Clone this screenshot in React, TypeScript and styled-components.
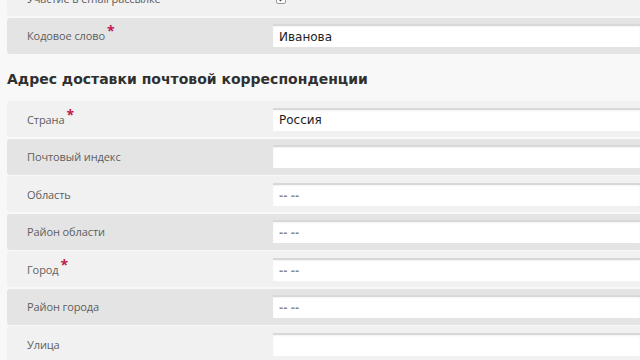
import React from "react";
import styled, { createGlobalStyle } from "styled-components";

const GlobalStyle = createGlobalStyle`
  html, body {
    margin: 0;
    padding: 0;
    background: #f8f8f8;
    overflow: hidden;
  }
`;

const Page = styled.div`
  width: 640px;
  height: 360px;
  overflow: hidden;
  padding-left: 7px;
  box-sizing: border-box;
  font-family: "Open Sans", "Liberation Sans", sans-serif;
`;

// the page is scrolled, so the first block starts above the top edge
const Form = styled.div<{ $scrolled?: boolean }>`
  margin-top: ${({ $scrolled }) => ($scrolled ? "-20px" : "0")};
  display: flex;
  flex-direction: column;
`;

const Row = styled.div<{ $dark?: boolean }>`
  display: grid;
  grid-template-columns: 266px 1fr;
  align-items: center;
  height: 36px;
  margin-bottom: 1.5px;
  border-radius: 3px 0 0 3px;
  background: ${({ $dark }) => ($dark ? "#e4e4e4" : "#f1f1f1")};
`;

const Label = styled.span`
  padding-left: 20px;
  font-size: 11px;
  color: #5e5e5e;
  letter-spacing: -0.1px;
`;

const Required = styled.sup`
  color: #c2184c;
  font-size: 14px;
  font-weight: bold;
  margin-left: 2px;
  line-height: 0;
  position: relative;
  top: 1px;
`;

const Field = styled.div<{ $empty?: boolean }>`
  height: 23px;
  box-sizing: border-box;
  background: #fff;
  border-top: 2px solid #d8d8d8;
  box-shadow: inset 0 1px 2px rgba(0, 0, 0, 0.05);
  display: flex;
  align-items: center;
  padding-left: 6px;
  font-family: "DejaVu Sans", sans-serif;
  font-size: ${({ $empty }) => ($empty ? "10px" : "12px")};
  font-weight: ${({ $empty }) => ($empty ? "bold" : "normal")};
  color: ${({ $empty }) => ($empty ? "#888" : "#222")};
`;

const CheckCell = styled.div`
  display: flex;
  align-items: center;
  padding-left: 3px;
`;

const CheckBox = styled.span`
  width: 8px;
  height: 8px;
  border: 1px solid #999;
  border-radius: 2px;
  background: #fdfdfd;
  display: flex;
  align-items: center;
  justify-content: center;
  margin-top: 2px;
`;

const Heading = styled.h2`
  margin: 14px 0 12px;
  font-family: "DejaVu Sans", sans-serif;
  font-weight: bold;
  font-size: 14px;
  color: #303030;
  height: 20px;
  line-height: 20px;
`;

type Item = { label: string; value?: string; required?: boolean; empty?: boolean };

const address: Item[] = [
  { label: "Страна", value: "Россия", required: true },
  { label: "Почтовый индекс", value: "" },
  { label: "Область", value: "-- --", empty: true },
  { label: "Район области", value: "-- --", empty: true },
  { label: "Город", value: "-- --", required: true, empty: true },
  { label: "Район города", value: "-- --", empty: true },
  { label: "Улица", value: "" },
];

export default function App() {
  return (
    <Page>
      <GlobalStyle />
      <Form $scrolled>
        <Row>
          <Label>Участие в email рассылке</Label>
          <CheckCell>
            <CheckBox>
              <svg width="6" height="6" viewBox="0 0 6 6">
                <path d="M1 3l1.5 1.5L5 1.5" stroke="#444" strokeWidth="1.4" fill="none" />
              </svg>
            </CheckBox>
          </CheckCell>
        </Row>
        <Row $dark>
          <Label>
            Кодовое слово<Required>*</Required>
          </Label>
          <Field>Иванова</Field>
        </Row>
      </Form>
      <Heading>Адрес доставки почтовой корреспонденции</Heading>
      <Form>
        {address.map((item, i) => (
          <Row key={item.label} $dark={i % 2 === 1}>
            <Label>
              {item.label}
              {item.required && <Required>*</Required>}
            </Label>
            <Field $empty={item.empty}>{item.value}</Field>
          </Row>
        ))}
      </Form>
    </Page>
  );
}
